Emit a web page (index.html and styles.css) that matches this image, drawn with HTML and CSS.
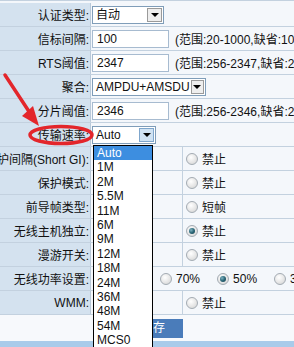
FILE: index.html
```html
<!DOCTYPE html>
<html lang="zh-CN">
<head>
  <meta charset="UTF-8">
  <title>无线高级设置</title>
  <link rel="stylesheet" href="styles.css">
</head>
<body>
  <div class="form">
    <div class="row">
      <div class="label">认证类型:</div>
      <div class="value">
        <div class="select sel-auth"><span class="select-text">自动</span><span class="select-btn"><i></i></span></div>
      </div>
    </div>
    <div class="row">
      <div class="label">信标间隔:</div>
      <div class="value">
        <div class="input">100</div>
        <span class="range">(范围:20-1000,缺省:100)</span>
      </div>
    </div>
    <div class="row">
      <div class="label">RTS阈值:</div>
      <div class="value">
        <div class="input">2347</div>
        <span class="range">(范围:256-2347,缺省:2347)</span>
      </div>
    </div>
    <div class="row">
      <div class="label">聚合:</div>
      <div class="value">
        <div class="select sel-agg"><span class="select-text">AMPDU+AMSDU</span><span class="select-btn"><i></i></span></div>
      </div>
    </div>
    <div class="row">
      <div class="label">分片阈值:</div>
      <div class="value">
        <div class="input">2346</div>
        <span class="range">(范围:256-2346,缺省:2346)</span>
      </div>
    </div>
    <div class="row">
      <div class="label">传输速率:</div>
      <div class="value">
        <div class="select sel-rate"><span class="select-text">Auto</span><span class="select-btn open"><i></i></span></div>
      </div>
    </div>
    <div class="row">
      <div class="label">保护间隔(Short GI):</div>
      <div class="value split">
        <div class="cell"><span class="radio on"></span></div>
        <div class="cell"><span class="radio"></span>禁止</div>
      </div>
    </div>
    <div class="row">
      <div class="label">保护模式:</div>
      <div class="value split">
        <div class="cell"><span class="radio on"></span></div>
        <div class="cell"><span class="radio"></span>禁止</div>
      </div>
    </div>
    <div class="row">
      <div class="label">前导帧类型:</div>
      <div class="value split">
        <div class="cell"><span class="radio on"></span></div>
        <div class="cell"><span class="radio"></span>短帧</div>
      </div>
    </div>
    <div class="row">
      <div class="label">无线主机独立:</div>
      <div class="value split">
        <div class="cell"><span class="radio"></span></div>
        <div class="cell"><span class="radio on"></span>禁止</div>
      </div>
    </div>
    <div class="row">
      <div class="label">漫游开关:</div>
      <div class="value split">
        <div class="cell"><span class="radio on"></span></div>
        <div class="cell"><span class="radio"></span>禁止</div>
      </div>
    </div>
    <div class="row">
      <div class="label">无线功率设置:</div>
      <div class="value power">
        <span class="opt opt-first"><span class="radio"></span></span>
        <span class="opt"><span class="radio"></span>70%</span>
        <span class="opt"><span class="radio on"></span>50%</span>
        <span class="opt"><span class="radio"></span>30%</span>
      </div>
    </div>
    <div class="row">
      <div class="label">WMM:</div>
      <div class="value split">
        <div class="cell"><span class="radio on"></span></div>
        <div class="cell"><span class="radio"></span>禁止</div>
      </div>
    </div>
    <div class="actions">
      <a class="button">保存</a>
    </div>
    <div class="bottom-bar"></div>
  </div>

  <div class="dropdown">
    <div class="on">Auto</div>
    <div>1M</div>
    <div>2M</div>
    <div>5.5M</div>
    <div>11M</div>
    <div>6M</div>
    <div>9M</div>
    <div>12M</div>
    <div>18M</div>
    <div>24M</div>
    <div>36M</div>
    <div>48M</div>
    <div>54M</div>
    <div>MCS0</div>
  </div>

  <svg class="mark" width="294" height="347" viewBox="0 0 294 347">
    <path d="M5 75 L30 113" stroke="#e3262b" stroke-width="3.5" stroke-linecap="round" fill="none"/>
    <polygon points="39,126 22,116 33,106" fill="#e3262b"/>
    <ellipse cx="61" cy="135" rx="31" ry="8.5" stroke="#e3262b" stroke-width="3.5" fill="none"/>
  </svg>
</body>
</html>
```

FILE: styles.css
```css
* {
  margin: 0;
  padding: 0;
  box-sizing: border-box;
}

body {
  width: 294px;
  height: 347px;
  overflow: hidden;
  position: relative;
  background: #f4f7fb;
  font-family: 'Liberation Sans', 'Noto Sans CJK SC', sans-serif;
  font-size: 12px;
  color: #111;
}

.form {
  padding-top: 2px;
  border-top: 1px solid #c3d1df;
}

.row {
  display: grid;
  grid-template-columns: 91px 1fr;
  height: 24px;
  border-bottom: 1px solid #c3d1df;
  white-space: nowrap;
}

.label {
  display: flex;
  justify-content: flex-end;
  align-items: center;
  padding-right: 1px;
  background: #d4e2ef;
  border-right: 1px solid #b9c9d9;
}

.value {
  display: flex;
  align-items: center;
  padding-left: 1px;
  overflow: hidden;
  background: #f4f7fb;
}

.value > * {
  flex-shrink: 0;
}

.input {
  width: 77px;
  height: 18px;
  line-height: 16px;
  padding-left: 4px;
  background: #fff;
  border: 1px solid #a7bbd0;
}

.range {
  margin-left: 6px;
}

.select {
  display: flex;
  height: 18px;
  background: #fff;
  border: 1px solid #7f9db9;
}

.sel-auth { width: 72px; }
.sel-agg { width: 114px; }
.sel-rate { width: 64px; }

.select-text {
  flex: 1;
  line-height: 16px;
  padding-left: 3px;
}

.select-btn {
  width: 15px;
  margin: 1px;
  display: flex;
  justify-content: center;
  align-items: center;
  background: #eeeeee;
  border: 1px solid #9a9a9a;
}

.select-btn.open {
  background: #cfe2f3;
  border-color: #7fa6cc;
}

.select-btn i {
  width: 0;
  height: 0;
  border-left: 4px solid transparent;
  border-right: 4px solid transparent;
  border-top: 4px solid #000;
}

.split {
  display: grid;
  grid-template-columns: 91px 1fr;
  padding-left: 0;
}

.cell {
  display: flex;
  align-items: center;
  height: 100%;
  padding-left: 3px;
}

.cell + .cell {
  border-left: 1px solid #c3d1df;
}

.radio {
  position: relative;
  display: inline-block;
  flex-shrink: 0;
  width: 12px;
  height: 12px;
  margin-right: 4px;
  border-radius: 50%;
  border: 1px solid #a3abb3;
  background: radial-gradient(circle at 40% 35%, #ffffff 0%, #e6e6e6 55%, #cfcfcf 100%);
}

.radio.on::after {
  content: '';
  position: absolute;
  left: 2px;
  top: 2px;
  width: 6px;
  height: 6px;
  border-radius: 50%;
  background: radial-gradient(circle at 35% 35%, #7fb3c2 0%, #2a6677 50%, #163f4c 100%);
}

.power {
  gap: 17px;
  padding-left: 5px;
}

.opt {
  display: inline-flex;
  align-items: center;
}

.opt-first {
  width: 47px;
}

.actions {
  height: 26px;
  display: flex;
  align-items: center;
  padding-left: 123px;
  background: #f7f9fc;
}

.button {
  display: inline-block;
  width: 60px;
  height: 19px;
  line-height: 19px;
  text-align: center;
  background: #4a7cba;
  color: #fff;
}

.bottom-bar {
  height: 10px;
  background: #a9cbea;
}

.dropdown {
  position: absolute;
  left: 93px;
  top: 145px;
  width: 60px;
  height: 210px;
  background: #fff;
  border: 1px solid #000;
}

.dropdown div {
  height: 14.4px;
  line-height: 14px;
  padding-left: 3px;
}

.dropdown .on {
  background: #3d8ee0;
  color: #fff;
}

.mark {
  position: absolute;
  left: 0;
  top: 0;
  pointer-events: none;
}
```
